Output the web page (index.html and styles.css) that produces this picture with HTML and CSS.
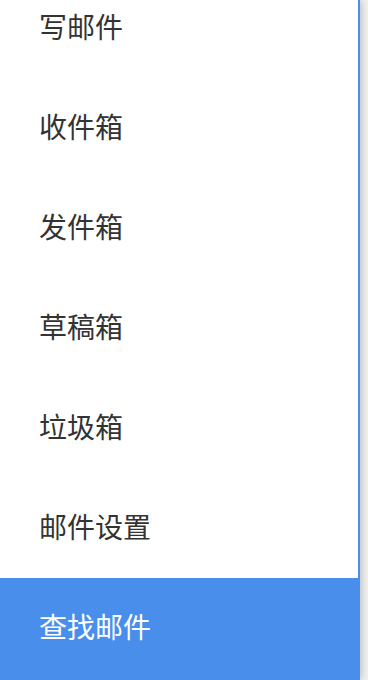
FILE: index.html
```html
<!DOCTYPE html>
<html lang="zh">
<head>
<meta charset="utf-8">
<link rel="stylesheet" href="styles.css">
</head>
<body>
<nav class="sidebar">
  <ul class="menu">
    <li class="menu-item">写邮件</li>
    <li class="menu-item">收件箱</li>
    <li class="menu-item">发件箱</li>
    <li class="menu-item">草稿箱</li>
    <li class="menu-item">垃圾箱</li>
    <li class="menu-item">邮件设置</li>
    <li class="menu-item active">查找邮件</li>
  </ul>
</nav>
</body>
</html>
```

FILE: styles.css
```css
html, body {
  margin: 0;
  padding: 0;
  height: 680px;
  overflow: hidden;
  background: #f2f2f2;
}
body {
  font-family: "Noto Sans CJK SC", "Noto Sans", sans-serif;
}
.sidebar {
  width: 358px;
  height: 680px;
  background: #fff;
  border-right: 2px solid #4a8eec;
  box-shadow: 1px 0 8px rgba(0, 0, 0, 0.25);
  overflow: hidden;
}
.menu {
  list-style: none;
  margin: -22px 0 0 0;
  padding: 0;
}
.menu-item {
  height: 100px;
  box-sizing: border-box;
  display: flex;
  align-items: center;
  padding: 0 0 4px 39px;
  font-size: 28px;
  color: #333;
}
.menu-item.active {
  height: 104px;
  padding-bottom: 8px;
  background: #4a8eec;
  color: #fff;
  margin-right: -2px;
}
```
